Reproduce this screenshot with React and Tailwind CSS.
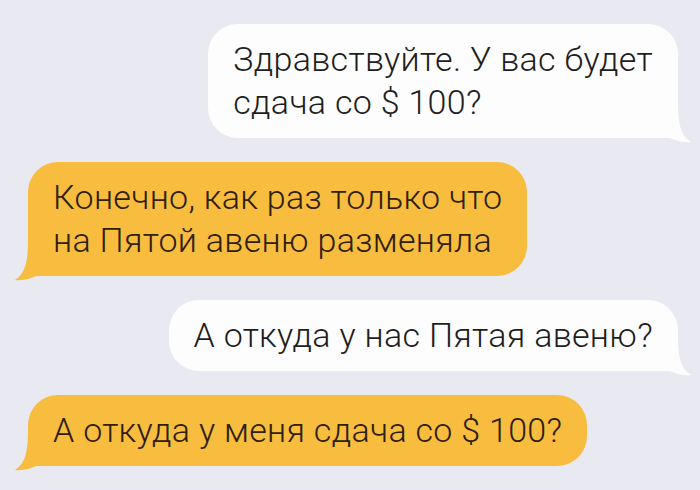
import React from 'react';

function Tail({ side, color }) {
  // little speech-bubble tail, drawn at the bottom corner of a bubble
  const pos = side === 'left' ? 'left-[-14px] bottom-[-5px]' : 'right-[-14px] bottom-[-5px] -scale-x-100';
  return (
    <svg className={`absolute ${pos}`} width="30" height="40" viewBox="0 0 30 40">
      <path d="M14 0 C14 24 10 33 1 39 C9 40 19 37 26 33 L26 0 Z" fill={color} />
    </svg>
  );
}

function Bubble({ side, children }) {
  const mine = side === 'right';
  return (
    <div
      className={`relative w-fit px-[25px] py-[14px] text-[34px] leading-[43px] font-light tracking-[0.3px] ${
        mine
          ? 'self-end bg-[#fdfdfd] text-[#1e1e1e] rounded-[30px] rounded-br-none'
          : 'self-start bg-[#f8bd3e] text-[#2e200c] rounded-[30px] rounded-bl-none'
      }`}
    >
      {children}
      <Tail side={side} color={mine ? '#fdfdfd' : '#f8bd3e'} />
    </div>
  );
}

export default function App() {
  return (
    <div
      className="w-[700px] h-[490px] overflow-hidden bg-[#e9e9f1] pt-[24px] pl-[28px] pr-[22px] flex flex-col gap-[24px]"
      style={{ fontFamily: 'Roboto, "Noto Sans", sans-serif' }}
    >
      <Bubble side="right">
        Здравствуйте. У вас будет
        <br />
        сдача со $ 100?
      </Bubble>
      <Bubble side="left">
        Конечно, как раз только что
        <br />
        на Пятой авеню разменяла
      </Bubble>
      <Bubble side="right">А откуда у нас Пятая авеню?</Bubble>
      <Bubble side="left">А откуда у меня сдача со $ 100?</Bubble>
    </div>
  );
}
